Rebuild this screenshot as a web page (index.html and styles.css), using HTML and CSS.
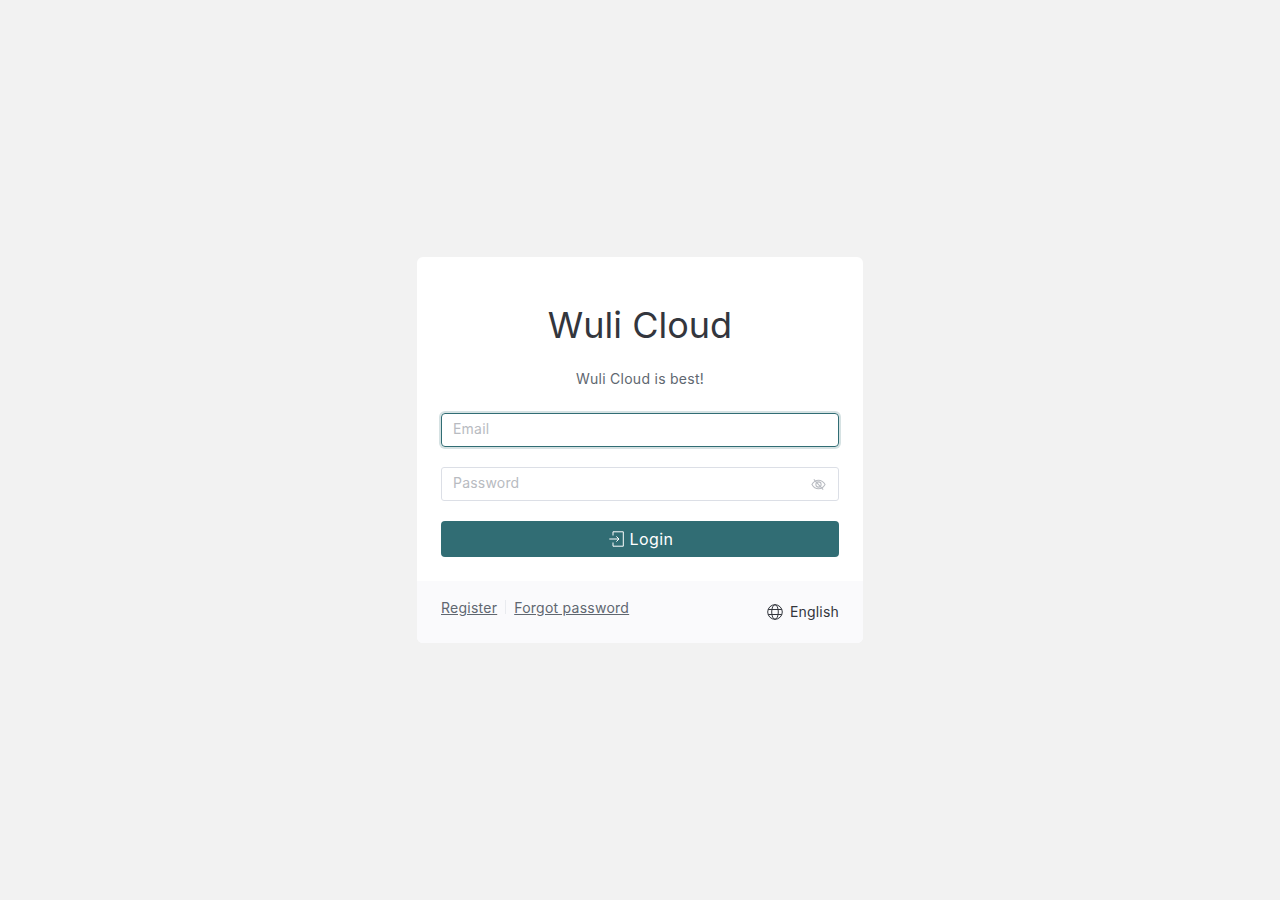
FILE: index.html
```html
<!DOCTYPE html>
<html lang="en">
<head>
    <meta charset="UTF-8">
    <meta name="viewport" content="width=device-width, initial-scale=1.0">
    <title>Wuli Cloud</title>
    <link rel="stylesheet" href="styles.css">
</head>
<body>

<div class="card">
    <div class="card-body">
        <h1 class="title">Wuli Cloud</h1>
        <p class="subtitle">Wuli Cloud is best!</p>

        <form class="login-form">
            <div class="field field-focus">
                <input type="email" placeholder="Email">
            </div>
            <div class="field">
                <input type="password" placeholder="Password">
                <svg class="eye" viewBox="0 0 16 16" fill="none" stroke="currentColor" stroke-width="1.1">
                    <path d="M1 8C2.7 5 5.1 3.4 8 3.4S13.3 5 15 8C13.3 11 10.9 12.6 8 12.6S2.7 11 1 8Z"/>
                    <circle cx="8" cy="8" r="2.8"/>
                    <path d="M3 2.5L13 13.5"/>
                </svg>
            </div>
            <button type="button" class="login-btn">
                <svg class="login-icon" viewBox="0 0 15 16" fill="none" stroke="currentColor" stroke-width="1">
                    <path d="M4 4.5V0.8H14.3V15.2H4V11.5"/>
                    <path d="M0.3 8H10M7.4 5.4L10 8L7.4 10.6"/>
                </svg>
                <span>Login</span>
            </button>
        </form>
    </div>

    <div class="card-footer">
        <div class="links">
            <a href="#">Register</a>
            <span class="divider"></span>
            <a href="#">Forgot password</a>
        </div>
        <div class="lang">
            <svg class="globe" viewBox="0 0 16 16" fill="none" stroke="currentColor" stroke-width="1">
                <circle cx="8" cy="8" r="7.3"/>
                <ellipse cx="8" cy="8" rx="3.3" ry="7.3"/>
                <path d="M1.2 5.5H14.8M1.2 10.5H14.8"/>
            </svg>
            <span class="lang-name">English</span>
        </div>
    </div>
</div>

</body>
</html>
```

FILE: styles.css
```css
* {
    box-sizing: border-box;
}
body {
    background-color: #f2f2f2;
    font-family: Inter, "Noto Sans", sans-serif;
    display: flex;
    justify-content: center;
    align-items: center;
    height: 100vh;
    margin: 0;
}
.card {
    width: 446px;
    background-color: white;
    border-radius: 6px;
    overflow: hidden;
}
.card-body {
    padding: 48px 24px 24px;
}
.title {
    margin: 0;
    font-size: 36px;
    line-height: 40px;
    font-weight: 400;
    text-align: center;
    color: #33363d;
}
.subtitle {
    margin: 24px 0 0;
    font-size: 14px;
    line-height: 20px;
    letter-spacing: 0.27px;
    text-align: center;
    color: #606770;
}
.login-form {
    margin-top: 24px;
    display: flex;
    flex-direction: column;
    gap: 20px;
}
.field {
    height: 34px;
    display: flex;
    align-items: center;
    padding: 0 11px;
    border: 1px solid #dcdfe6;
    border-radius: 3px;
}
.field-focus {
    border-color: #316d74;
    border-radius: 4px;
    box-shadow: 0 0 0 2px #d6e2e3;
}
.field input {
    flex: 1;
    min-width: 0;
    border: none;
    outline: none;
    padding: 0;
    margin-top: -4px;
    font-family: inherit;
    font-size: 14px;
    letter-spacing: 0.2px;
    background: none;
}
.field input::placeholder {
    color: #b8bbc1;
    opacity: 1;
}
.eye {
    width: 15px;
    height: 15px;
    color: #b8bbc1;
    margin-right: 1px;
}
.login-btn {
    height: 36px;
    display: flex;
    align-items: center;
    justify-content: center;
    gap: 6px;
    padding: 0 0 0 2px;
    border: none;
    border-radius: 4px;
    background-color: #316d74;
    color: white;
    font-family: inherit;
    font-size: 16px;
    letter-spacing: 0.4px;
    cursor: pointer;
}
.login-icon {
    width: 15px;
    height: 16px;
}
.card-footer {
    height: 62px;
    padding: 0 24px;
    display: flex;
    justify-content: space-between;
    background-color: #fafafc;
}
.links {
    display: flex;
    align-items: center;
    height: 52px;
    font-size: 14px;
    letter-spacing: 0.25px;
}
.links a {
    color: #606770;
}
.divider {
    width: 1px;
    height: 14px;
    margin: 0 8px;
    background-color: #e9ebef;
}
.lang {
    display: flex;
    align-items: center;
    gap: 7px;
    font-size: 14px;
    letter-spacing: 0.2px;
    color: #33363d;
}
.lang-name {
    margin-top: -2px;
}
.globe {
    width: 16px;
    height: 16px;
}
```
